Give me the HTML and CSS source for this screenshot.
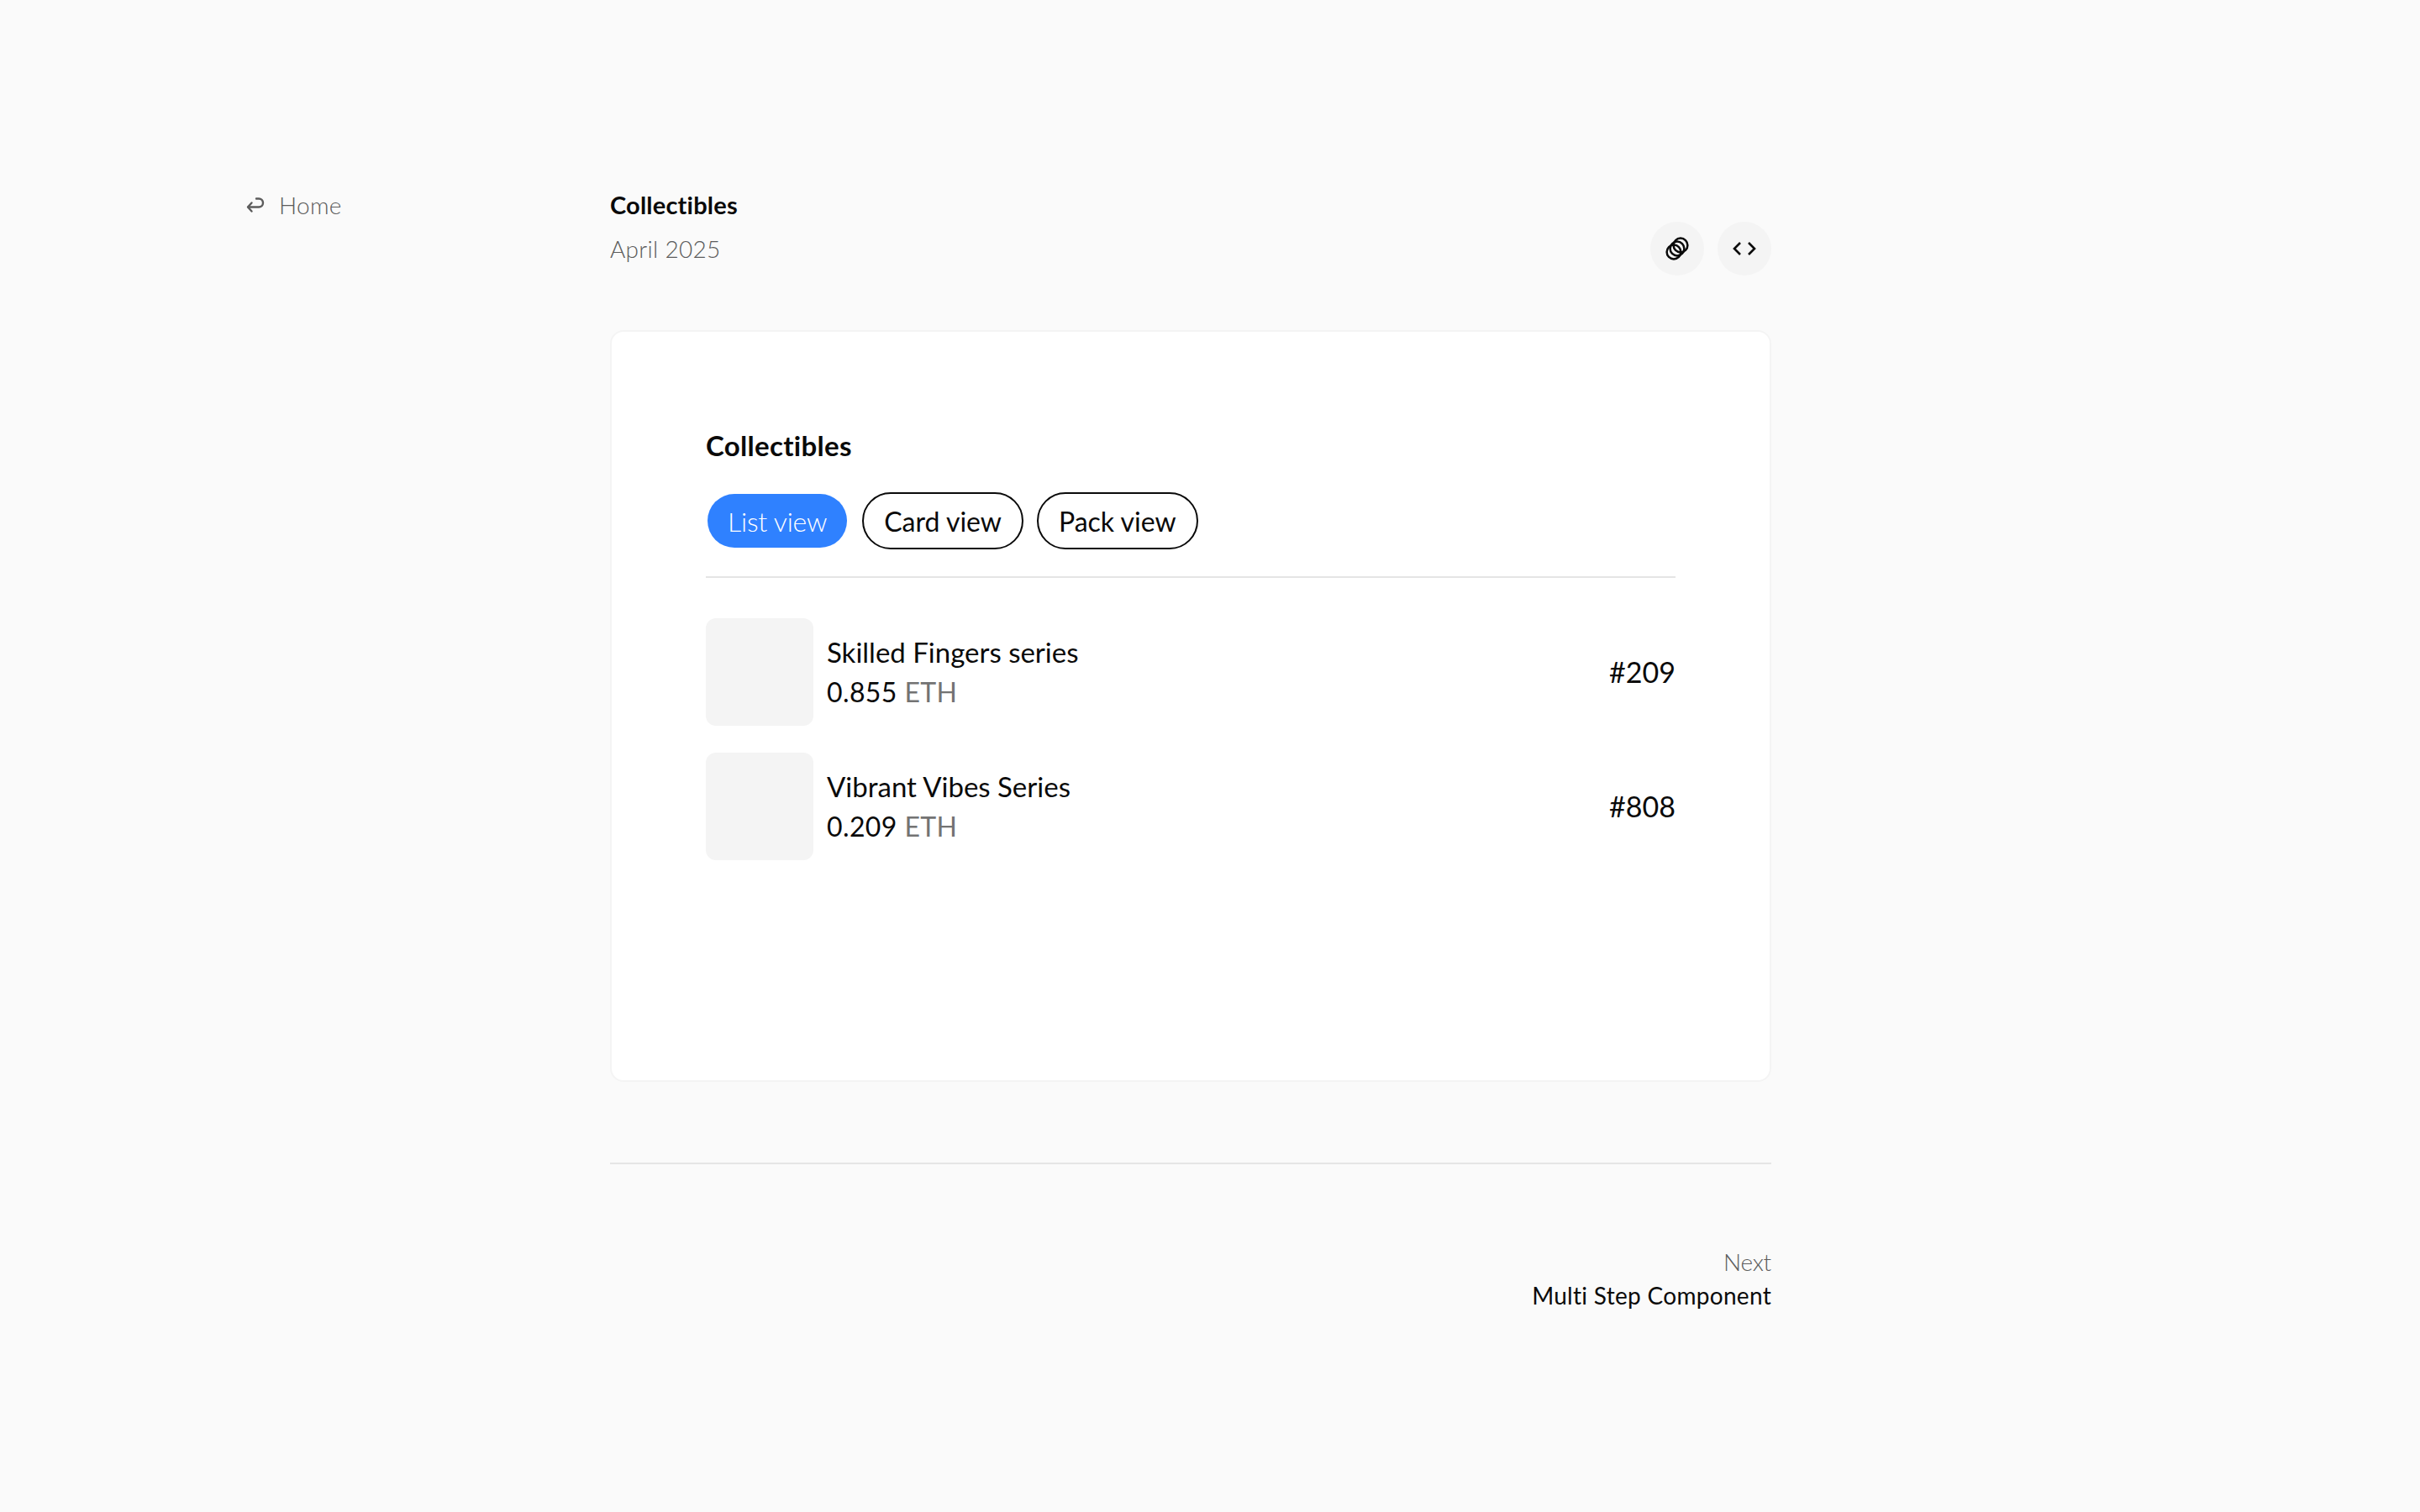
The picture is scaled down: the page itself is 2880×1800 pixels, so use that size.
FILE: index.html
```html
<!DOCTYPE html>
<html lang="en">
<head>
    <meta charset="UTF-8">
    <meta name="viewport" content="width=device-width, initial-scale=1.0">
    <title>Collectibles</title>
    <link rel="stylesheet" href="styles.css">
</head>
<body>
    <div class="page">
        <nav class="sidebar">
            <a class="home-link" href="#">
                <svg class="home-icon" viewBox="0 0 24 24" fill="none" stroke="currentColor" stroke-width="2.4" stroke-linecap="round" stroke-linejoin="round">
                    <path d="M7.500 9.500 3 14.500 7.500 19.500"/>
                    <path d="M3.500 14.500H16a5 5 0 0 0 0-10h-3"/>
                </svg>
                <span>Home</span>
            </a>
        </nav>
        <main class="main">
            <header class="header">
                <div>
                    <h1 class="title">Collectibles</h1>
                    <p class="date">April 2025</p>
                </div>
                <div class="actions">
                    <button class="round-btn" aria-label="Copy link">
                        <svg viewBox="0 0 32 32" fill="none" stroke="#0a0a0a" stroke-width="2.5">
                            <circle cx="12" cy="20" r="8.400"/>
                            <circle cx="16" cy="16" r="8.400"/>
                            <circle cx="20" cy="12" r="8.400"/>
                        </svg>
                    </button>
                    <button class="round-btn" aria-label="View code">
                        <svg viewBox="0 0 32 32" fill="none" stroke="#0a0a0a" stroke-width="2.6">
                            <path d="M11 9 4 16l7 7"/>
                            <path d="M21 9l7 7-7 7"/>
                        </svg>
                    </button>
                </div>
            </header>

            <section class="card">
                <h2 class="card-title">Collectibles</h2>
                <div class="tabs">
                    <button class="tab tab-active">List view</button>
                    <button class="tab">Card view</button>
                    <button class="tab">Pack view</button>
                </div>
                <ul class="items">
                    <li class="item">
                        <div class="thumb"></div>
                        <div class="item-info">
                            <div class="item-name">Skilled Fingers series</div>
                            <div class="item-price">0.855 <span class="muted">ETH</span></div>
                        </div>
                        <div class="item-id">#209</div>
                    </li>
                    <li class="item">
                        <div class="thumb"></div>
                        <div class="item-info">
                            <div class="item-name">Vibrant Vibes Series</div>
                            <div class="item-price">0.209 <span class="muted">ETH</span></div>
                        </div>
                        <div class="item-id">#808</div>
                    </li>
                </ul>
            </section>

            <footer class="pager">
                <span class="pager-label">Next</span>
                <a class="pager-link" href="#">Multi Step Component</a>
            </footer>
        </main>
    </div>
</body>
</html>
```

FILE: styles.css
```css
* {
    box-sizing: border-box;
}
body {
    margin: 0;
    background-color: #fafafa;
    color: #0a0a0a;
    font-family: "Lato", "Liberation Sans", sans-serif;
    font-variant-ligatures: none;
}
.page {
    display: flex;
    padding: 224px 772px 0 292px;
}
.sidebar {
    width: 434px;
    flex-shrink: 0;
}
.home-link {
    display: flex;
    align-items: center;
    gap: 16px;
    color: #5c5c5c;
    font-size: 28px;
    font-weight: 300;
    line-height: 40px;
    letter-spacing: 0.3px;
    text-decoration: none;
}
.home-icon {
    width: 24px;
    height: 24px;
}
.main {
    flex: 1;
}
.header {
    display: flex;
    justify-content: space-between;
    align-items: flex-end;
    padding-bottom: 77px;
}
.title {
    margin: 0 0 12px;
    font-size: 29px;
    line-height: 40px;
    font-weight: 700;
    letter-spacing: 0.2px;
}
.date {
    margin: 0;
    color: #5c5c5c;
    font-size: 28px;
    font-weight: 300;
    line-height: 40px;
    letter-spacing: 0.3px;
}
.actions {
    display: flex;
    gap: 16px;
    margin-bottom: -12px;
}
.round-btn {
    display: flex;
    align-items: center;
    justify-content: center;
    width: 64px;
    height: 64px;
    padding: 0;
    border: none;
    border-radius: 50%;
    background-color: #f4f4f4;
}
.round-btn svg {
    width: 32px;
    height: 32px;
}
.card {
    height: 895px;
    padding: 116px 112px 0;
    background-color: #fff;
    border: 2px solid #f4f4f4;
    border-radius: 16px;
}
.card-title {
    margin: 0 0 35px;
    font-size: 33px;
    line-height: 38px;
    font-weight: 700;
    letter-spacing: 0.3px;
    padding-bottom: 2px;
}
.tabs {
    display: flex;
    align-items: center;
    gap: 16px;
    padding-bottom: 32px;
    border-bottom: 2px solid #e5e5e5;
}
.tab {
    height: 68px;
    padding: 0 24px;
    border: 2px solid #0a0a0a;
    border-radius: 34px;
    background-color: #fff;
    color: #0a0a0a;
    font-family: inherit;
    font-size: 32px;
}
.tab-active {
    height: 64px;
    margin-left: 2px;
    margin-right: 2px;
    border: none;
    background-color: #2f81ff;
    color: #fff;
    font-weight: 300;
    letter-spacing: -0.2px;
}
.items {
    display: flex;
    flex-direction: column;
    gap: 32px;
    margin: 48px 0 0;
    padding: 0;
    list-style: none;
}
.item {
    display: flex;
    align-items: center;
    gap: 16px;
}
.thumb {
    width: 128px;
    height: 128px;
    border-radius: 12px;
    background-color: #f4f4f4;
}
.item-info {
    flex: 1;
    font-size: 33px;
    line-height: 48px;
}
.item-price {
    font-size: 32px;
    letter-spacing: 0.4px;
}
.muted {
    color: #737373;
}
.item-id {
    font-size: 34px;
    line-height: 46px;
}
.pager {
    display: flex;
    flex-direction: column;
    align-items: flex-end;
    margin-top: 96px;
    padding-top: 96px;
    border-top: 2px solid #e5e5e5;
    font-size: 28px;
    line-height: 40px;
}
.pager-label {
    color: #5c5c5c;
    font-weight: 300;
    letter-spacing: -0.2px;
}
.pager-link {
    color: #0a0a0a;
    letter-spacing: 0.3px;
    text-decoration: none;
}
```
